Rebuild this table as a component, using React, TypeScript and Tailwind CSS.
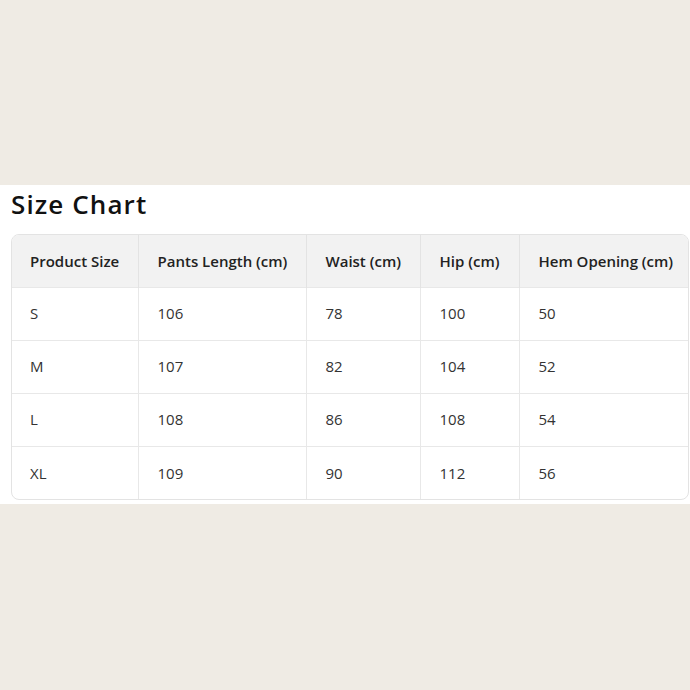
const headers = ["Product Size", "Pants Length (cm)", "Waist (cm)", "Hip (cm)", "Hem Opening (cm)"];

const rows = [
  ["S", "106", "78", "100", "50"],
  ["M", "107", "82", "104", "52"],
  ["L", "108", "86", "108", "54"],
  ["XL", "109", "90", "112", "56"],
];

const widths = ["w-[126px]", "w-[168px]", "w-[114px]", "w-[99px]", ""];

const App = () => {
  return (
    <div className="min-h-screen bg-[#efebe4] pt-[185px] font-['Open_Sans',sans-serif]">
      <section className="bg-white pl-[11px] pb-[4px]">
        <h2 className="h-[40px] pt-[3px] text-[26px] font-semibold leading-[32px] tracking-[1.1px] text-[#111]">
          Size Chart
        </h2>
        <div className="mt-[9px] w-[678px] overflow-hidden rounded-[8px] border border-[#e3e3e3]">
          <table className="w-full table-fixed border-collapse text-left">
            <thead>
              <tr className="h-[52px] bg-[#f2f2f2]">
                {headers.map((h, i) => (
                  <th
                    key={h}
                    className={`${widths[i]} whitespace-nowrap border-l border-[#e3e3e3] pl-[19px] pr-[12px] text-[15px] font-semibold text-[#222] first:border-l-0 first:pl-[18px]`}
                  >
                    {h}
                  </th>
                ))}
              </tr>
            </thead>
            <tbody>
              {rows.map((r) => (
                <tr key={r[0]} className="h-[53px] border-t border-[#e8e8e8]">
                  {r.map((c, i) => (
                    <td
                      key={i}
                      className="border-l border-[#e8e8e8] pl-[19px] text-[15px] text-[#333] first:border-l-0 first:pl-[18px]"
                    >
                      {c}
                    </td>
                  ))}
                </tr>
              ))}
            </tbody>
          </table>
        </div>
      </section>
    </div>
  );
};

export default App;
